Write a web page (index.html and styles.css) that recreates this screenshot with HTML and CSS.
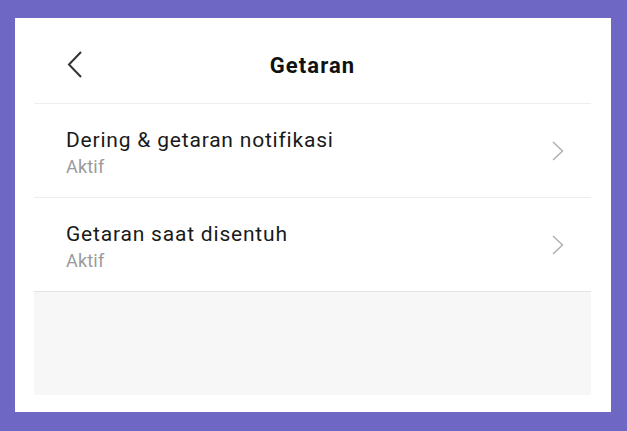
FILE: index.html
```html
<!DOCTYPE html>
<html lang="id">
<head>
    <meta charset="UTF-8">
    <meta name="viewport" content="width=device-width, initial-scale=1.0">
    <title>Getaran</title>
    <link rel="stylesheet" href="styles.css">
</head>
<body>
    <div class="card">
        <!-- Header -->
        <div class="header">
            <svg class="back" width="16" height="28" viewBox="0 0 16 28">
                <polyline points="14,1 2,13.5 14,26" fill="none" stroke="#333" stroke-width="2"/>
            </svg>
            <h1>Getaran</h1>
        </div>

        <!-- Daftar pengaturan -->
        <div class="list">
            <div class="row">
                <div class="texts">
                    <div class="title">Dering &amp; getaran notifikasi</div>
                    <div class="sub">Aktif</div>
                </div>
                <svg class="chev" width="12" height="20" viewBox="0 0 12 20">
                    <polyline points="1,1 10.5,10 1,19" fill="none" stroke="#b0b0b0" stroke-width="1.5"/>
                </svg>
            </div>
            <div class="row">
                <div class="texts">
                    <div class="title">Getaran saat disentuh</div>
                    <div class="sub">Aktif</div>
                </div>
                <svg class="chev" width="12" height="20" viewBox="0 0 12 20">
                    <polyline points="1,1 10.5,10 1,19" fill="none" stroke="#b0b0b0" stroke-width="1.5"/>
                </svg>
            </div>
        </div>

        <div class="filler"></div>
    </div>
</body>
</html>
```

FILE: styles.css
```css
body {
    margin: 0;
    padding: 18px 16px 19px 15px;
    background-color: #6e67c3;
    font-family: Roboto, "Noto Sans", sans-serif;
}
.card {
    background: white;
    padding: 0 20px 17px 19px;
    height: 394px;
    box-sizing: border-box;
    display: flex;
    flex-direction: column;
}
.header {
    height: 86px;
    border-bottom: 1px solid #eeeeee;
    box-sizing: border-box;
    display: flex;
    align-items: center;
    justify-content: center;
    position: relative;
}
.back {
    position: absolute;
    left: 33px;
    top: 33px;
}
.header h1 {
    margin: 0;
    font-size: 22px;
    font-weight: bold;
    letter-spacing: 1.1px;
    color: #111;
    padding-top: 10px;
}
.row {
    height: 94px;
    border-bottom: 1px solid #eeeeee;
    box-sizing: border-box;
    display: flex;
    align-items: center;
    justify-content: space-between;
    padding: 0 27px 0 32px;
}
.row:last-child {
    border-bottom-color: #e4e4e4;
}
.texts {
    padding-top: 3px;
}
.title {
    font-size: 21px;
    letter-spacing: 0.8px;
    color: #1a1a1a;
    line-height: 25px;
}
.sub {
    font-size: 18px;
    letter-spacing: 0.2px;
    color: #9a9a9a;
    line-height: 21px;
    margin-top: 3px;
}
.filler {
    flex: 1;
    background: #f7f7f7;
}
```
